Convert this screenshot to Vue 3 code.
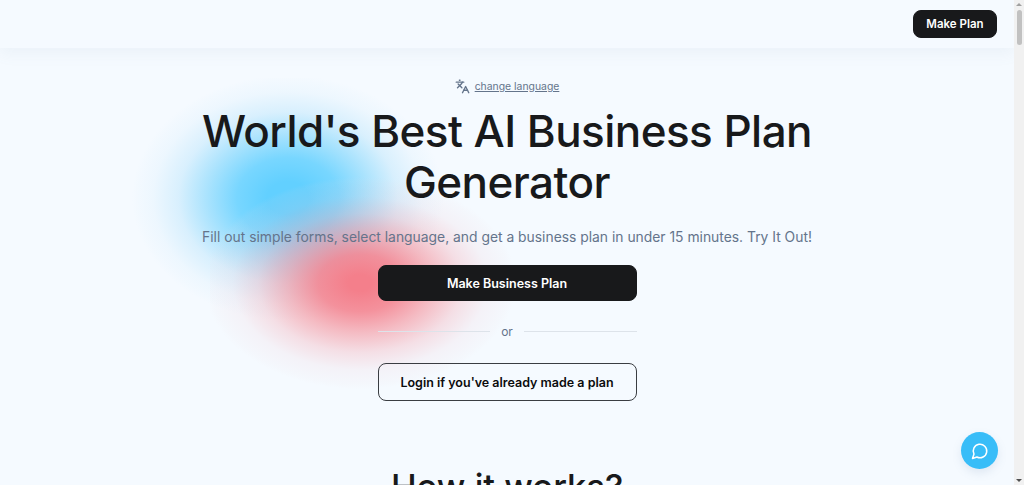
<script setup>
const title = "World's Best AI Business Plan Generator";
</script>

<template>
  <div class="page">
    <div class="main">
      <header class="nav">
        <button class="nav-btn">Make Plan</button>
      </header>
      <section class="hero">
        <div class="blob blue"></div>
        <div class="blob red"></div>
        <a class="lang">
          <svg class="lang-icon" viewBox="0 0 24 24" width="15" height="15" fill="none" stroke="#64748b" stroke-width="2.2" stroke-linecap="round" stroke-linejoin="round">
            <path d="M5 8l6 6" />
            <path d="M4 14l6-6 2-3" />
            <path d="M2 5h12" />
            <path d="M7 2h1" />
            <path d="M22 22l-5-10-5 10" />
            <path d="M14 18h6" />
          </svg>
          <span>change language</span>
        </a>
        <h1>{{ title }}</h1>
        <p class="sub">Fill out simple forms, select language, and get a business plan in under 15 minutes. Try It Out!</p>
        <div class="actions">
          <button class="primary">Make Business Plan</button>
          <div class="or"><span class="line"></span><span class="or-text">or</span><span class="line"></span></div>
          <button class="secondary">Login if you've already made a plan</button>
        </div>
        <h2>How it works?</h2>
      </section>
      <button class="chat" aria-label="Chat">
        <svg viewBox="0 0 24 24" width="18" height="18" fill="none" stroke="#fff" stroke-width="2" stroke-linecap="round" stroke-linejoin="round">
          <path d="M7.9 20A9 9 0 1 0 4 16.1L2 22Z" />
        </svg>
      </button>
    </div>
    <div class="scrollbar">
      <span class="arrow up"></span>
      <span class="thumb"></span>
      <span class="arrow down"></span>
    </div>
  </div>
</template>

<style>
html, body { margin: 0; height: 100%; overflow: hidden; }
</style>

<style scoped>
.page {
  display: flex;
  width: 1024px;
  height: 485px;
  overflow: hidden;
  background: #f5faff;
  font-family: Inter, "Noto Sans", sans-serif;
  color: #18191b;
}
.main { position: relative; flex: 1; min-width: 0; overflow: hidden; }
.nav {
  position: relative;
  z-index: 2;
  height: 48px;
  box-sizing: border-box;
  display: flex;
  justify-content: flex-end;
  align-items: center;
  padding-right: 17px;
  background: #f5faff;
  box-shadow: 0 6px 14px rgba(120, 140, 170, 0.07);
}
button { font-family: inherit; cursor: pointer; }
.nav-btn {
  width: 84px;
  height: 28px;
  border: 1px solid #18191b;
  border-radius: 8px;
  background: #18191b;
  color: #fff;
  font-size: 11.5px;
  font-weight: 600;
  padding: 0;
}
.hero {
  position: relative;
  display: flex;
  flex-direction: column;
  align-items: center;
  padding-top: 30px;
}
.blob { position: absolute; pointer-events: none; }
.blue {
  left: 130px;
  top: 30px;
  width: 340px;
  height: 300px;
  background: radial-gradient(ellipse 150px 118px at 158px 120px, #62d0ff 0%, #62d0ff 14%, rgba(98, 208, 255, 0.85) 34%, rgba(115, 210, 252, 0.58) 54%, rgba(150, 216, 250, 0.3) 73%, rgba(180, 225, 250, 0.12) 90%, rgba(195, 230, 250, 0.05) 100%, rgba(195, 230, 250, 0) 104%);
}
.red {
  left: 210px;
  top: 115px;
  width: 330px;
  height: 245px;
  background: radial-gradient(ellipse 150px 102px at 150px 120px, #f47f8b 0%, #f47f8b 8%, rgba(244, 127, 139, 0.85) 28%, rgba(244, 140, 150, 0.58) 48%, rgba(243, 165, 175, 0.32) 68%, rgba(238, 195, 205, 0.15) 85%, rgba(235, 215, 222, 0.07) 100%, rgba(235, 215, 222, 0) 104%);
}
.lang {
  position: relative;
  display: flex;
  align-items: center;
  gap: 5px;
  height: 16px;
  color: #64748b;
  font-size: 10.4px;
}
.lang span { text-decoration: underline; }
h1 {
  position: relative;
  margin: 12px 0 0;
  width: 700px;
  text-align: center;
  font-size: 44px;
  line-height: 51px;
  font-weight: 500;
  letter-spacing: -0.55px;
}
.sub {
  position: relative;
  margin: 18px 0 0;
  font-size: 13.87px;
  line-height: 22px;
  color: #64748b;
  white-space: nowrap;
}
.actions {
  position: relative;
  display: flex;
  flex-direction: column;
  width: 259px;
  margin-top: 17px;
}
.primary, .secondary {
  width: 100%;
  border-radius: 8px;
  font-size: 12.5px;
  font-weight: 600;
  padding: 0;
}
.primary { height: 36px; background: #18191b; border: 1px solid #18191b; color: #fff; }
.secondary { height: 38px; background: transparent; border: 1px solid #3a3d42; color: #0b0b0c; }
.or {
  display: flex;
  align-items: center;
  gap: 11px;
  height: 62px;
  padding-bottom: 1px;
  box-sizing: border-box;
}
.line { flex: 1; height: 1px; background: #dde3ea; }
.or-text { font-size: 12px; color: #64748b; }
h2 {
  position: relative;
  margin: 66px 0 0;
  font-size: 34.5px;
  line-height: 40px;
  font-weight: 500;
}
.chat {
  position: absolute;
  z-index: 3;
  left: 961px;
  top: 432px;
  width: 37px;
  height: 37px;
  border: 0;
  border-radius: 50%;
  background: #38bdf8;
  display: flex;
  align-items: center;
  justify-content: center;
  padding: 0;
  box-shadow: 0 4px 10px rgba(100, 130, 170, 0.15);
}
.scrollbar {
  width: 10px;
  flex: none;
  display: flex;
  flex-direction: column;
  align-items: center;
  background: #f1f1f1;
  padding: 3px 0;
  box-sizing: border-box;
}
.thumb { width: 5px; height: 35px; margin-top: 4px; border-radius: 3px; background: #c1c1c1; }
.arrow { width: 0; height: 0; border-left: 3px solid transparent; border-right: 3px solid transparent; }
.up { border-bottom: 3px solid #a0a0a0; }
.down { border-top: 3px solid #505050; margin-top: auto; }
</style>
